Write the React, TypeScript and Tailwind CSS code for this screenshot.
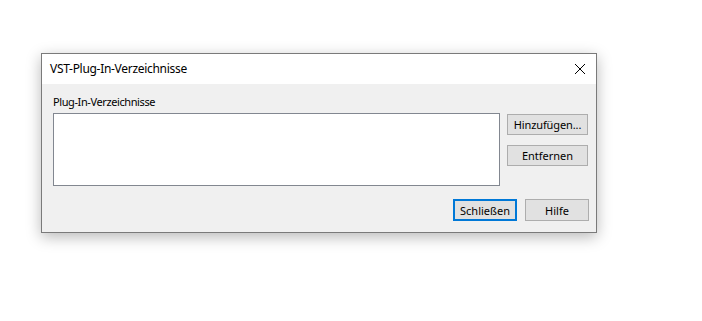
export default function App() {
  const ui = { fontFamily: '"Noto Sans", "Open Sans", "Liberation Sans", sans-serif' };
  return (
    <div className="w-[702px] h-[321px] bg-white pl-[41px] pt-[53px]" style={ui}>
      <div className="w-[556px] h-[180px] border border-[#7a7a7a] bg-[#f0f0f0] flex flex-col shadow-[0_4px_14px_rgba(0,0,0,0.28)]">
        <div className="h-[30px] bg-white flex items-center justify-between pl-[8px] pr-[9px]">
          <span className="text-[12px] tracking-[-0.3px] text-black">VST-Plug-In-Verzeichnisse</span>
          <svg width="12" height="12" viewBox="0 0 12 12" className="mr-[1px]">
            <path d="M1 1L11 11M11 1L1 11" stroke="#000" strokeWidth="1" fill="none" />
          </svg>
        </div>
        <div className="flex flex-col pl-[11px] pr-[7px] text-[11px] text-black">
          <span className="mt-[10px] leading-[16px] tracking-[-0.4px]">Plug-In-Verzeichnisse</span>
          <div className="flex mt-[3px]">
            <div className="w-[447px] h-[73px] bg-white border border-[#828790]"></div>
            <div className="flex flex-col ml-[7px] mt-[1px] gap-[10px]">
              <button className="w-[81px] h-[21px] bg-[#e1e1e1] border border-[#adadad] leading-none tracking-[-0.1px]">Hinzufügen...</button>
              <button className="w-[81px] h-[21px] bg-[#e1e1e1] border border-[#adadad] leading-none">Entfernen</button>
            </div>
          </div>
          <div className="flex justify-end gap-[8px] mt-[13px]">
            <button className="w-[64px] h-[22px] bg-[#e1e1e1] border-2 border-[#0078d7] leading-none">Schließen</button>
            <button className="w-[64px] h-[22px] bg-[#e1e1e1] border border-[#adadad] leading-none">Hilfe</button>
          </div>
        </div>
      </div>
    </div>
  );
}
